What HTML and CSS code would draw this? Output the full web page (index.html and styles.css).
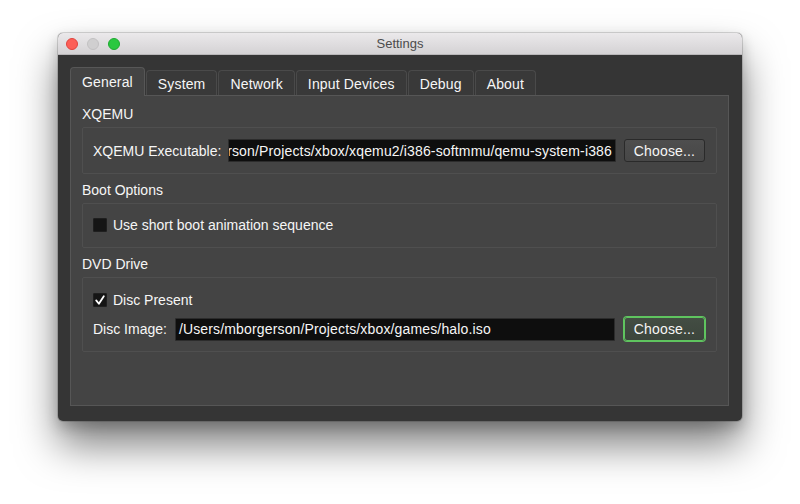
FILE: index.html
```html
<!DOCTYPE html>
<html>
<head>
<meta charset="utf-8">
<title>Settings</title>
<link rel="stylesheet" href="styles.css">
</head>
<body>
<div class="desktop">
<div class="window">
  <div class="titlebar">
    <div class="lights">
      <span class="light red"></span>
      <span class="light gray"></span>
      <span class="light green"></span>
    </div>
    <div class="title">Settings</div>
    <div></div>
  </div>
  <div class="content">
    <div class="tabs">
      <div class="tab active">General</div>
      <div class="tab">System</div>
      <div class="tab">Network</div>
      <div class="tab">Input Devices</div>
      <div class="tab">Debug</div>
      <div class="tab">About</div>
    </div>
    <div class="pane">
      <div class="group-title">XQEMU</div>
      <div class="box box-exec">
        <div class="row">
          <span class="label">XQEMU Executable:</span>
          <div class="field field-exec"><span class="field-text">/Users/mborgerson/Projects/xbox/xqemu2/i386-softmmu/qemu-system-i386</span></div>
          <button class="btn">Choose...</button>
        </div>
      </div>
      <div class="group-title">Boot Options</div>
      <div class="box box-boot">
        <label class="check-row">
          <span class="checkbox"></span>
          <span class="label">Use short boot animation sequence</span>
        </label>
      </div>
      <div class="group-title">DVD Drive</div>
      <div class="box box-dvd">
        <label class="check-row">
          <span class="checkbox"><svg width="14" height="14" viewBox="0 0 14 14"><path d="M3.2 7.4 L5.9 10.8 L10.8 3.2" fill="none" stroke="#ffffff" stroke-width="1.8" stroke-linecap="round" stroke-linejoin="round"/></svg></span>
          <span class="label">Disc Present</span>
        </label>
        <div class="row row-disc">
          <span class="label">Disc Image:</span>
          <div class="field field-disc"><span class="field-text">/Users/mborgerson/Projects/xbox/games/halo.iso</span></div>
          <button class="btn btn-focus">Choose...</button>
        </div>
      </div>
    </div>
  </div>
</div>
</div>
</body>
</html>
```
FILE: styles.css
```css
* { box-sizing: border-box; }

html, body {
  margin: 0;
  padding: 0;
  background: #ffffff;
  font-family: "Liberation Sans", Arial, sans-serif;
}

.desktop {
  width: 800px;
  height: 504px;
  padding: 33px 0 0 58px;
  overflow: hidden;
}

.window {
  width: 684px;
  height: 388px;
  border-radius: 5px;
  background: #353535;
  display: flex;
  flex-direction: column;
  box-shadow: 0 0 0 1px rgba(0,0,0,0.14), 0 24px 40px rgba(0,0,0,0.5), 0 6px 14px rgba(0,0,0,0.2);
  overflow: hidden;
}

.titlebar {
  height: 22px;
  flex: none;
  display: grid;
  grid-template-columns: 1fr auto 1fr;
  align-items: center;
  background: linear-gradient(#ebe9eb, #d4d2d4);
  border-bottom: 1px solid #b9b7b9;
}

.lights {
  display: flex;
  gap: 9px;
  padding-left: 8px;
  align-items: center;
}

.light {
  width: 12px;
  height: 12px;
  border-radius: 50%;
  display: block;
}
.red { background: #fc5f57; border: 0.5px solid #e0443e; }
.gray { background: #d0cfd0; border: 0.5px solid #c2c1c2; }
.green { background: #2ac840; border: 0.5px solid #1eaa30; }

.title {
  font-size: 13px;
  color: #4c4c4c;
  line-height: 22px;
}

.content {
  flex: 1;
  display: flex;
  flex-direction: column;
  padding: 12px 13px 15px 12px;
}

.tabs {
  display: flex;
  align-items: flex-end;
  gap: 1px;
  height: 28px;
  flex: none;
  position: relative;
  z-index: 1;
}

.tab {
  height: 25px;
  padding: 0 11px;
  font-size: 14px;
  letter-spacing: 0.15px;
  color: #f6f6f6;
  display: flex;
  align-items: center;
  padding-top: 2px;
  background: #393939;
  border: 1px solid #4a4a4a;
  border-bottom: none;
  border-radius: 4px 4px 0 0;
}

.tab.active {
  height: 29px;
  margin-bottom: -1px;
  background: #444444;
  border-color: #575757;
  padding-top: 0;
  padding-bottom: 1px;
}

.pane {
  flex: 1;
  background: #444444;
  border: 1px solid #565656;
  padding: 9px 11px 0 11px;
}

.group-title {
  font-size: 14px;
  color: #f6f6f6;
  height: 18px;
  line-height: 18px;
  margin-bottom: 4px;
}

.box {
  border: 1px solid #4f4f4f;
  border-radius: 2px;
  margin-bottom: 7px;
  padding: 0 11px 0 10px;
  display: flex;
  flex-direction: column;
}

.box-exec { padding-top: 11px; padding-bottom: 11px; }
.box-boot { padding-top: 14px; padding-bottom: 15px; }
.box-dvd { padding-top: 15px; padding-bottom: 9px; gap: 9px; }

.row {
  display: flex;
  align-items: center;
  gap: 7px;
}

.row-disc { min-height: 26px; gap: 8px; }

.label {
  font-size: 14px;
  color: #f6f6f6;
  white-space: nowrap;
}

.field {
  flex: 1;
  height: 23px;
  background: #0e0e0e;
  border: 1px solid #2c2c2c;
  border-radius: 1px;
  display: flex;
  align-items: center;
  overflow: hidden;
  padding: 0 4px 0 3px;
}

.field-exec {
  direction: rtl;
  justify-content: flex-start;
  padding-right: 3px;
}

.field-exec .field-text {
  direction: ltr;
  unicode-bidi: isolate;
}

.field-text {
  font-size: 14px;
  letter-spacing: 0.15px;
  color: #f6f6f6;
  white-space: nowrap;
  flex: none;
}

.btn {
  flex: none;
  width: 81px;
  height: 23px;
  margin-left: 1px;
  font-family: "Liberation Sans", Arial, sans-serif;
  font-size: 14px;
  letter-spacing: 0.15px;
  color: #f6f6f6;
  background: linear-gradient(#4e4e4e, #474747);
  border: 1px solid #2a2a2a;
  border-radius: 3px;
  padding: 0;
}

.btn-focus {
  height: 24px;
  background: linear-gradient(#434d43, #3c453c);
  border: 1px solid #5fc45f;
  box-shadow: 0 0 0 1px #5fc45f;
}

.check-row {
  display: flex;
  align-items: center;
  gap: 6px;
  height: 14px;
}

.checkbox {
  width: 14px;
  height: 14px;
  flex: none;
  background: #151515;
  border: 1px solid #1f1f1f;
  border-radius: 1px;
  display: block;
  position: relative;
}

.checkbox svg {
  position: absolute;
  left: -1px;
  top: -1px;
}
```
